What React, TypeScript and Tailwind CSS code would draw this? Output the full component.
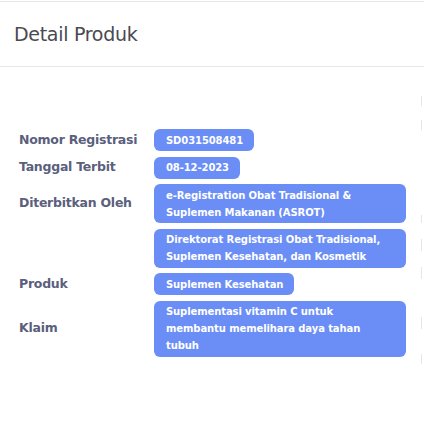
const rows: { label: string; values: string[] }[] = [
  { label: "Nomor Registrasi", values: ["SD031508481"] },
  { label: "Tanggal Terbit", values: ["08-12-2023"] },
  {
    label: "Diterbitkan Oleh",
    values: [
      "e-Registration Obat Tradisional & Suplemen Makanan (ASROT)",
      "Direktorat Registrasi Obat Tradisional, Suplemen Kesehatan, dan Kosmetik",
    ],
  },
  { label: "Produk", values: ["Suplemen Kesehatan"] },
  { label: "Klaim", values: ["Suplementasi vitamin C untuk membantu memelihara daya tahan tubuh"] },
];

// faint edge of the next column, cut off by the viewport: [top margin, height]
const edgeMarks: [number, number][] = [
  [29, 10],
  [14, 10],
  [85, 8],
  [16, 12],
  [16, 12],
  [38, 12],
  [25, 10],
];

export default function App() {
  return (
    <div className="w-[424px] h-[424px] bg-white font-['DejaVu_Sans',sans-serif] overflow-hidden">
      {/* header */}
      <div className="mt-[1px] border-t border-gray-200 h-[66px] border-b flex items-center px-[14px]">
        <h1 className="text-[19px] text-[#4a4a4f] tracking-[-0.3px]">Detail Produk</h1>
      </div>

      <div className="flex">
        {/* body */}
        <div className="w-[421px] pt-[62px] pl-[19px] grid grid-cols-[135px_252px] content-start gap-y-[5.5px]">
          {rows.flatMap((row) =>
            row.values.map((v, i) => [
              <div
                key={row.label + i + "l"}
                className="flex items-center text-[12.5px] font-bold text-[#5b5f7d] tracking-[-0.25px]"
              >
                {i === 0 ? row.label : ""}
              </div>,
              <div key={row.label + i + "v"} className="flex items-start">
                <span className="w-fit bg-[#6a8df6] text-white text-[10px] font-bold leading-[17px] rounded-[6px] pl-[12px] pr-[11px] py-[2.5px] tracking-[-0.1px]">
                  {v}
                </span>
              </div>,
            ])
          )}
        </div>

        {/* edge */}
        <div className="flex flex-col">
          {edgeMarks.map(([mt, h], i) => (
            <div key={i} className="w-[1px] bg-[#e6e6ea]" style={{ marginTop: mt, height: h }} />
          ))}
        </div>
      </div>
    </div>
  );
}
